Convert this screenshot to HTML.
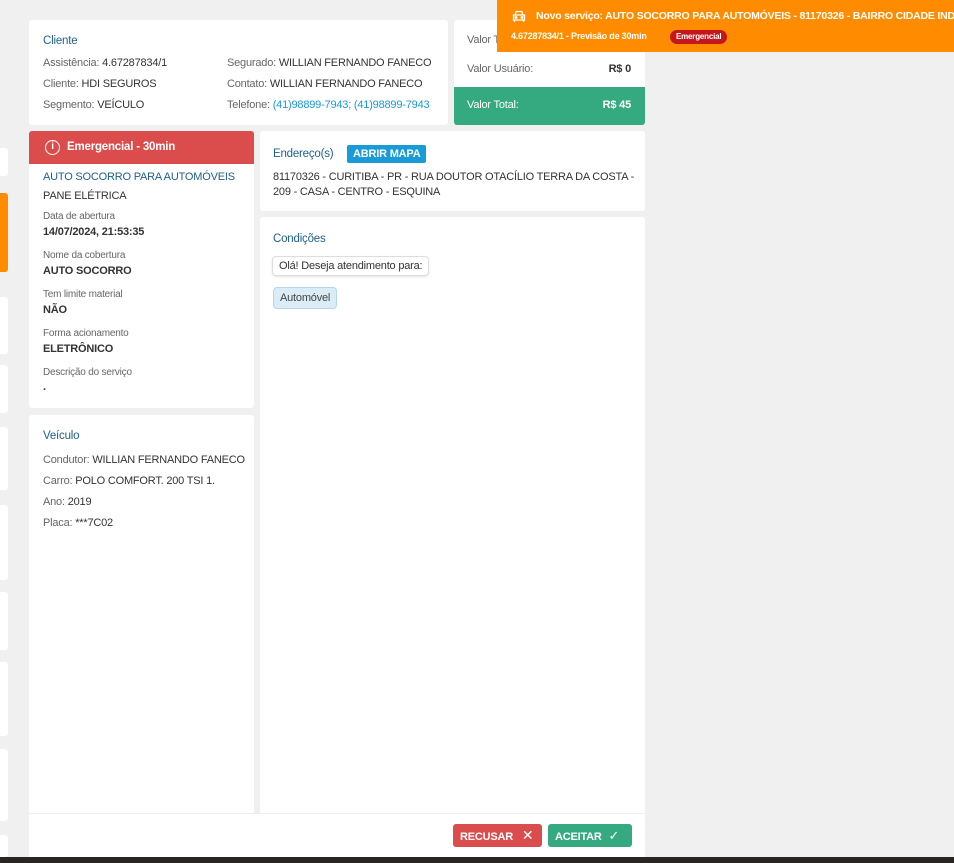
<!DOCTYPE html>
<html><head><meta charset="utf-8"><style>
*{margin:0;padding:0;box-sizing:border-box}
body{width:954px;height:863px;background:#f0f0f0;font-family:"Liberation Sans",sans-serif;font-size:11px;color:#333;position:relative;overflow:hidden;letter-spacing:-0.2px}
.a{position:absolute}
.card{position:absolute;background:#fff;border-radius:3px}
.lbl{color:#666}
.t{color:#1f5f8b;font-weight:normal;font-size:11.5px}
.sm{font-size:10px;color:#666}
.b{font-weight:bold;color:#333}
.side{position:absolute;left:0;width:8px;background:#fff;border-radius:0 3px 3px 0}
</style></head><body>
<div class="side" style="top:148px;height:28px"></div>
<div class="side" style="top:193px;height:79px;background:#ff8c00"></div>
<div class="side" style="top:297px;height:57px"></div>
<div class="side" style="top:365px;height:48px"></div>
<div class="side" style="top:427px;height:63px"></div>
<div class="side" style="top:505px;height:75px"></div>
<div class="side" style="top:592px;height:58px"></div>
<div class="side" style="top:662px;height:74px"></div>
<div class="side" style="top:749px;height:72px"></div>
<div class="side" style="top:835px;height:22px"></div>

<div class="card" style="left:29px;top:20px;width:419px;height:105px">
 <div class="a t" style="left:14px;top:15px">Cliente</div>
 <div class="a" style="left:14px;top:37px"><span class="lbl">Assistência:</span> 4.67287834/1</div>
 <div class="a" style="left:14px;top:58px"><span class="lbl">Cliente:</span> HDI SEGUROS</div>
 <div class="a" style="left:14px;top:79px"><span class="lbl">Segmento:</span> VEÍCULO</div>
 <div class="a" style="left:198px;top:37px"><span class="lbl">Segurado:</span> WILLIAN FERNANDO FANECO</div>
 <div class="a" style="left:198px;top:58px"><span class="lbl">Contato:</span> WILLIAN FERNANDO FANECO</div>
 <div class="a" style="left:198px;top:79px"><span class="lbl">Telefone:</span> <span style="color:#1a9ad6">(41)98899-7943; (41)98899-7943</span></div>
</div>

<div class="card" style="left:454px;top:20px;width:191px;height:105px;overflow:hidden">
 <div class="a lbl" style="left:13px;top:14px">Valor Total:</div>
 <div class="a lbl" style="left:13px;top:43px">Valor Usuário:</div>
 <div class="a b" style="right:14px;top:43px">R$ 0</div>
 <div class="a" style="left:0;top:67px;width:191px;height:38px;background:#35a97f;color:#fff">
  <div class="a" style="left:13px;top:12px">Valor Total:</div>
  <div class="a" style="right:14px;top:12px;font-weight:bold">R$ 45</div>
 </div>
</div>

<div class="a" style="left:497px;top:0;width:457px;height:52px;background:#ff8c00;color:#fff;overflow:hidden;white-space:nowrap">
 <svg class="a" style="left:15px;top:10px" width="14" height="13" viewBox="0 0 14 13" fill="none" stroke="#fff" stroke-width="1.3"><path d="M3 5l1.2-3.5h5.6L11 5M1.5 5h11v5h-11zM2.5 10v2M11.5 10v2"/><circle cx="4" cy="7.5" r=".8" fill="#fff"/><circle cx="10" cy="7.5" r=".8" fill="#fff"/></svg>
 <div class="a" style="left:39px;top:10px;font-weight:bold;font-size:10.5px">Novo serviço: AUTO SOCORRO PARA AUTOMÓVEIS - 81170326 - BAIRRO CIDADE INDUSTRIAL</div>
 <div class="a" style="left:14px;top:31px;font-size:9px;font-weight:bold">4.67287834/1 - Previsão de 30min</div>
 <div class="a" style="left:173px;top:30px;background:#c4161c;border-radius:7px;padding:1px 6px;font-size:8px;font-weight:bold;height:14px;line-height:12px">Emergencial</div>
</div>

<div class="card" style="left:29px;top:131px;width:225px;height:277px;overflow:hidden">
 <div class="a" style="left:0;top:0;width:225px;height:33px;background:#db4d4d;color:#fff">
  <div class="a" style="left:16px;top:9px;width:15px;height:15px;border:1.5px solid #fff;border-radius:50%;font-size:10px;text-align:center;line-height:12px;font-weight:bold">i</div>
  <div class="a" style="left:38px;top:10px;font-weight:bold;font-size:11.5px">Emergencial - 30min</div>
 </div>
 <div class="a t" style="left:14px;top:40px;font-size:11px">AUTO SOCORRO PARA AUTOMÓVEIS</div>
 <div class="a" style="left:14px;top:59px">PANE ELÉTRICA</div>
 <div class="a sm" style="left:14px;top:80px">Data de abertura</div>
 <div class="a b" style="left:14px;top:95px">14/07/2024, 21:53:35</div>
 <div class="a sm" style="left:14px;top:119px">Nome da cobertura</div>
 <div class="a b" style="left:14px;top:134px">AUTO SOCORRO</div>
 <div class="a sm" style="left:14px;top:158px">Tem limite material</div>
 <div class="a b" style="left:14px;top:173px">NÃO</div>
 <div class="a sm" style="left:14px;top:197px">Forma acionamento</div>
 <div class="a b" style="left:14px;top:212px">ELETRÔNICO</div>
 <div class="a sm" style="left:14px;top:236px">Descrição do serviço</div>
 <div class="a b" style="left:14px;top:250px">.</div>
</div>

<div class="card" style="left:29px;top:415px;width:225px;height:400px">
 <div class="a t" style="left:14px;top:15px">Veículo</div>
 <div class="a" style="left:14px;top:39px"><span class="lbl">Condutor:</span> WILLIAN FERNANDO FANECO</div>
 <div class="a" style="left:14px;top:60px"><span class="lbl">Carro:</span> POLO COMFORT. 200 TSI 1.</div>
 <div class="a" style="left:14px;top:81px"><span class="lbl">Ano:</span> 2019</div>
 <div class="a" style="left:14px;top:102px"><span class="lbl">Placa:</span> ***7C02</div>
</div>

<div class="card" style="left:260px;top:131px;width:385px;height:80px">
 <div class="a t" style="left:13px;top:17px">Endereço(s)</div>
 <div class="a" style="left:87px;top:14px;background:#1a9ad6;color:#fff;font-weight:bold;padding:3px 6px;border-radius:2px;font-size:11px">ABRIR MAPA</div>
 <div class="a" style="left:13px;top:39px;white-space:nowrap;line-height:15px">81170326 - CURITIBA - PR - RUA DOUTOR OTACÍLIO TERRA DA COSTA -<br>209 - CASA - CENTRO - ESQUINA</div>
</div>

<div class="card" style="left:260px;top:217px;width:385px;height:598px">
 <div class="a t" style="left:13px;top:16px">Condições</div>
 <div class="a" style="left:12px;top:39px;border:1px solid #ddd;border-radius:4px;padding:3px 6px;box-shadow:0 1px 2px rgba(0,0,0,.1)">Olá! Deseja atendimento para:</div>
 <div class="a" style="left:13px;top:70px;background:#daedf7;border:1px solid #b5d7ea;border-radius:4px;padding:4px 6px;color:#444">Automóvel</div>
</div>

<div class="a" style="left:29px;top:813px;width:616px;height:44px;background:#fff;border-top:1px solid #eee">
 <div class="a" style="left:424px;top:10px;width:89px;height:23px;background:#db4d4d;border-radius:3px;color:#fff;font-weight:bold;font-size:11px;line-height:23px;padding-left:7px">RECUSAR <span style="font-weight:normal;font-size:14px;margin-left:6px">✕</span></div>
 <div class="a" style="left:519px;top:10px;width:84px;height:23px;background:#35a97f;border-radius:3px;color:#fff;font-weight:bold;font-size:11px;line-height:23px;padding-left:7px">ACEITAR <span style="font-weight:normal;font-size:13px;margin-left:4px">✓</span></div>
</div>
<div class="a" style="left:0;top:857px;width:954px;height:6px;background:#2a2520"></div>
</body></html>
